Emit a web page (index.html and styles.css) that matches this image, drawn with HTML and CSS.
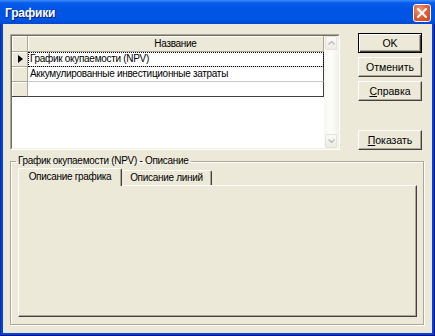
FILE: index.html
```html
<!DOCTYPE html>
<html lang="ru">
<head>
<meta charset="utf-8">
<title>Графики</title>
<link rel="stylesheet" href="styles.css">
</head>
<body>
<div class="window">
  <div class="titlebar">
    <span class="title">Графики</span>
    <span class="close"><svg width="10" height="10" viewBox="0 0 10 10"><path d="M1 1L9 9M9 1L1 9" stroke="#fff" stroke-width="2" stroke-linecap="square"/></svg></span>
  </div>
  <div class="client">
    <div class="top">
      <div class="grid">
        <div class="grid-inner">
          <div class="grid-data">
            <div class="table">
              <div class="ind head"></div><div class="hcell">Название</div>
              <div class="ind"><span class="arrow"></span></div><div class="cell focus">График окупаемости (NPV)</div>
              <div class="ind"></div><div class="cell">Аккумулированные инвестиционные затраты</div>
              <div class="ind last"></div><div class="cell last"></div>
            </div>
          </div>
          <div class="scroll">
            <div class="sbtn"><svg width="7" height="4" viewBox="0 0 7 4"><path d="M0.5 3.5L3.5 0.5L6.5 3.5" fill="none" stroke="#BDBDB6" stroke-width="1.4"/></svg></div>
            <div class="track"></div>
            <div class="sbtn"><svg width="7" height="4" viewBox="0 0 7 4"><path d="M0.5 0.5L3.5 3.5L6.5 0.5" fill="none" stroke="#BDBDB6" stroke-width="1.4"/></svg></div>
          </div>
        </div>
      </div>
      <div class="buttons">
        <button class="btn default">OK</button>
        <button class="btn">Отменить</button>
        <button class="btn"><u>С</u>правка</button>
        <button class="btn show"><u>П</u>оказать</button>
      </div>
    </div>
    <fieldset class="group">
      <legend>График окупаемости (NPV) - Описание</legend>
      <div class="tabs">
        <div class="tab active">Описание графика</div>
        <div class="tab second">Описание линий</div>
      </div>
      <div class="panel"></div>
    </fieldset>
  </div>
</div>
</body>
</html>
```

FILE: styles.css
```css
* { box-sizing: border-box; }
html, body { margin: 0; padding: 0; }
body {
  width: 435px;
  height: 336px;
  overflow: hidden;
  font-family: "Liberation Sans", Arial, sans-serif;
  font-size: 10px;
  letter-spacing: -0.3px;
  color: #000;
}
.window {
  width: 435px;
  height: 336px;
  display: flex;
  flex-direction: column;
  background: #0842D0;
  padding: 0 2px 2px 2px;
  border-left: 1px solid #0831B0;
  border-right: 1px solid #00138C;
  border-bottom: 1px solid #00138C;
}
.titlebar {
  height: 24px;
  margin: 0 -3px;
  display: flex;
  align-items: center;
  justify-content: space-between;
  padding: 1px 4px 0 5px;
  background: linear-gradient(#3B8CF6 0%, #0A5DEB 12%, #0054E3 40%, #0055E5 80%, #0048D0 100%);
}
.title {
  color: #fff;
  font-weight: bold;
  font-size: 12px;
  letter-spacing: -0.2px;
  text-shadow: 1px 1px 0 #0A1E80;
}
.close {
  width: 18px;
  height: 18px;
  border: 1px solid #fff;
  border-radius: 3px;
  background: radial-gradient(circle at 35% 30%, #F0A080 0%, #E0623A 45%, #C7421A 100%);
  display: flex;
  align-items: center;
  justify-content: center;
}
.client {
  flex: 1;
  background: #ECE9D8;
  display: flex;
  flex-direction: column;
  padding: 0 8px 8px 7px;
  min-height: 0;
}
.top {
  display: flex;
  align-items: flex-start;
  gap: 18px;
  padding-top: 9px;
  padding-right: 2px;
}
.grid {
  width: 330px;
  height: 116px;
  margin-top: 1px;
  border: 1px solid;
  border-color: #ACA899 #fff #fff #ACA899;
}
.grid-inner {
  height: 100%;
  display: flex;
  border: 1px solid;
  border-color: #716F64 #F1EFE2 #F1EFE2 #716F64;
  background: #fff;
}
.grid-data {
  flex: 1;
  background: #fff;
}
.table {
  display: grid;
  grid-template-columns: 16px 1fr;
  grid-template-rows: 16px 15px 15px 15px;
}
.ind, .hcell {
  background: #ECE9D8;
  border-right: 1px solid #ACA899;
  border-bottom: 1px solid #ACA899;
  box-shadow: inset 1px 1px 0 #fff;
}
.hcell {
  text-align: center;
  line-height: 15px;
}
.ind {
  display: flex;
  align-items: center;
  padding-left: 6px;
}
.arrow {
  width: 0;
  height: 0;
  border-left: 5px solid #000;
  border-top: 4px solid transparent;
  border-bottom: 4px solid transparent;
}
.cell {
  background: #fff;
  border-right: 1px solid #404040;
  border-bottom: 1px solid #C8C8C8;
  padding-left: 2px;
  line-height: 14px;
  white-space: nowrap;
  overflow: hidden;
}
.cell.focus {
  outline: 1px dotted #000;
  outline-offset: -1px;
}
.cell.last { border-bottom: 1px solid #404040; }
.ind.last { border-bottom: 1px solid #404040; }
.scroll {
  width: 14px;
  display: flex;
  flex-direction: column;
  background: linear-gradient(90deg, #F7F6F2, #FDFDFB 50%, #F3F2EC);
}
.track { flex: 1; }
.sbtn {
  height: 14px;
  margin: 0 1px 0 1px;
  border: 1px solid #E3E3DC;
  border-radius: 2px;
  background: linear-gradient(#FAFAF8, #ECEBE4);
  display: flex;
  align-items: center;
  justify-content: center;
}
.buttons {
  width: 64px;
  display: flex;
  flex-direction: column;
  gap: 4px;
}
.btn {
  height: 20px;
  width: 64px;
  padding: 0;
  font-family: "Liberation Sans", Arial, sans-serif;
  font-size: 10.5px;
  letter-spacing: 0;
  color: #000;
  background: #ECE9D8;
  border: 1px solid;
  border-color: #fff #404040 #404040 #fff;
  box-shadow: inset -1px -1px 0 #ACA899;
}
.btn.default {
  border: 1px solid #000;
  box-shadow: inset 1px 1px 0 #fff, inset -1px -1px 0 #404040, inset -2px -2px 0 #ACA899;
}
.btn.show { margin-top: 25px; }
.btn u { text-decoration: underline; }
.group {
  flex: 1;
  min-height: 0;
  margin: 5px 0 0 0;
  padding: 1px 6px 7px 7px;
  border: 1px solid #ACA899;
  box-shadow: 1px 1px 0 #fff, inset 1px 1px 0 #fff;
  display: flex;
  flex-direction: column;
}
.group legend {
  padding: 0 2px;
  margin-left: -2px;
  line-height: 12px;
}
.tabs {
  display: flex;
  align-items: flex-end;
  height: 17px;
  position: relative;
  z-index: 1;
}
.tab {
  height: 15px;
  line-height: 13px;
  text-align: center;
  background: #ECE9D8;
  border-top: 1px solid #fff;
  border-left: 1px solid #fff;
  border-right: 1px solid #404040;
  border-radius: 2px 2px 0 0;
  box-shadow: inset -1px 0 0 #ACA899;
}
.tab.active {
  width: 104px;
  height: 18px;
  margin-bottom: -1px;
  line-height: 16px;
}
.tab.second {
  width: 90px;
  border-left: none;
}
.panel {
  flex: 1;
  background: #ECE9D8;
  border-top: 1px solid #fff;
  border-left: 1px solid #fff;
  border-right: 1px solid #404040;
  border-bottom: 1px solid #404040;
  box-shadow: inset -1px -1px 0 #ACA899;
}
```
